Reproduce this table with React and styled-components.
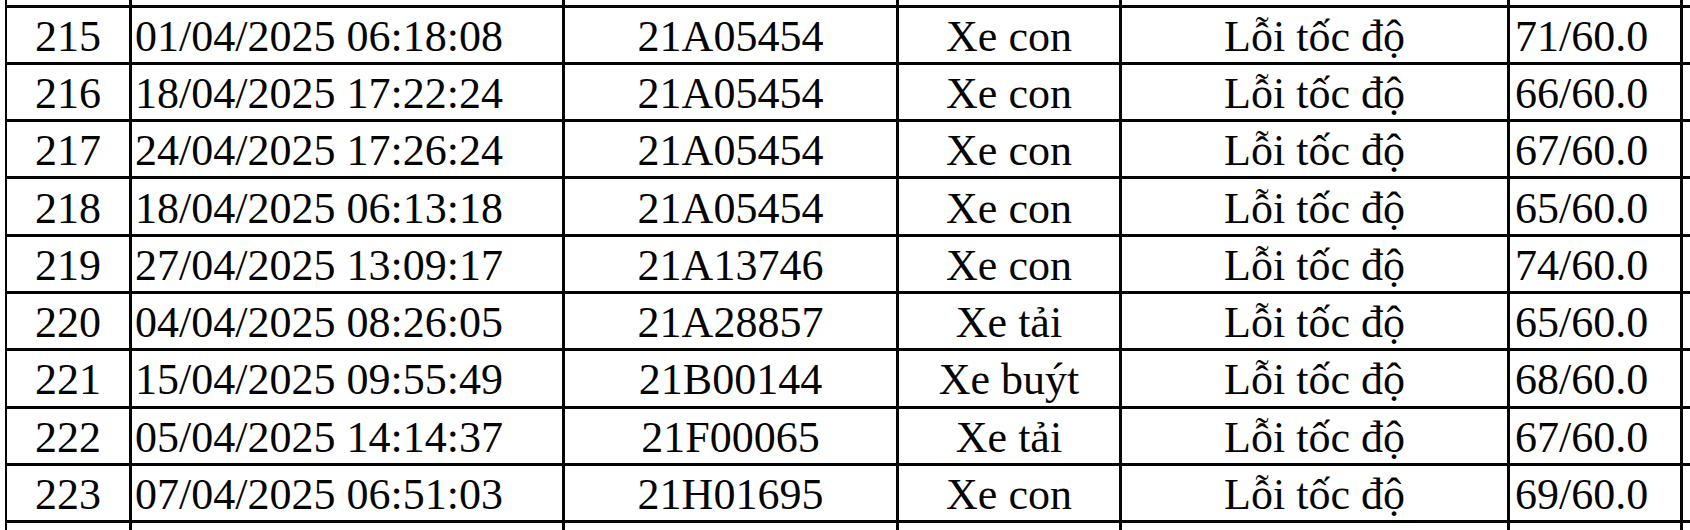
import React from "react"
import styled, { createGlobalStyle } from "styled-components"

/**
 * Global
 */
const GlobalStyle = createGlobalStyle`
  html, body {
    margin: 0;
    padding: 0;
    background: #ffffff;
    overflow: hidden;
  }
  body {
    font-family: "Liberation Serif", "Times New Roman", serif;
    color: #050505;
  }
`

/**
 * Styled Components
 */
const Page = styled.div`
  width: 1690px;
  height: 530px;
  overflow: hidden;
  background: #fff;
`
const Table = styled.div`
  margin-top: -49.8px;
  margin-left: 5px;
  display: flex;
  flex-direction: column;
`
const Row = styled.div`
  display: grid;
  grid-template-columns: 124px 433px 334px 223px 388px 176px;
  height: 57.3px;
  box-sizing: border-box;
  border-bottom: 3.5px solid #050505;
`
const Cell = styled.div`
  box-sizing: border-box;
  display: flex;
  align-items: center;
  justify-content: ${(p) => (p.$align === "left" ? "flex-start" : "center")};
  padding-left: ${(p) => (p.$align === "left" ? p.$pad || 3 : 0)}px;
  padding-top: 3px;
  border-left: ${(p) => (p.$first ? "2.5px" : "3.5px")} solid #050505;
  border-right: ${(p) => (p.$last ? "3px solid #050505" : "none")};
  font-size: 44px;
  white-space: nowrap;
  overflow: hidden;
`

// the rows just above and below the visible band show only their grid lines
const blank = ["", "", "", "", "", ""]

const rows = [
  blank,
  ["215", "01/04/2025 06:18:08", "21A05454", "Xe con", "Lỗi tốc độ", "71/60.0"],
  ["216", "18/04/2025 17:22:24", "21A05454", "Xe con", "Lỗi tốc độ", "66/60.0"],
  ["217", "24/04/2025 17:26:24", "21A05454", "Xe con", "Lỗi tốc độ", "67/60.0"],
  ["218", "18/04/2025 06:13:18", "21A05454", "Xe con", "Lỗi tốc độ", "65/60.0"],
  ["219", "27/04/2025 13:09:17", "21A13746", "Xe con", "Lỗi tốc độ", "74/60.0"],
  ["220", "04/04/2025 08:26:05", "21A28857", "Xe tải", "Lỗi tốc độ", "65/60.0"],
  ["221", "15/04/2025 09:55:49", "21B00144", "Xe buýt", "Lỗi tốc độ", "68/60.0"],
  ["222", "05/04/2025 14:14:37", "21F00065", "Xe tải", "Lỗi tốc độ", "67/60.0"],
  ["223", "07/04/2025 06:51:03", "21H01695", "Xe con", "Lỗi tốc độ", "69/60.0"],
  blank,
]

/**
 * Main Component
 */
const App = () => {
  return (
    <Page>
      <GlobalStyle />
      <Table>
        {rows.map(([no, time, plate, kind, error, speed], i) => (
          <Row key={i}>
            <Cell $first>{no}</Cell>
            <Cell $align="left">{time}</Cell>
            <Cell>{plate}</Cell>
            <Cell>{kind}</Cell>
            <Cell>{error}</Cell>
            <Cell $align="left" $pad={5} $last>
              {speed}
            </Cell>
          </Row>
        ))}
      </Table>
    </Page>
  )
}

export default App
